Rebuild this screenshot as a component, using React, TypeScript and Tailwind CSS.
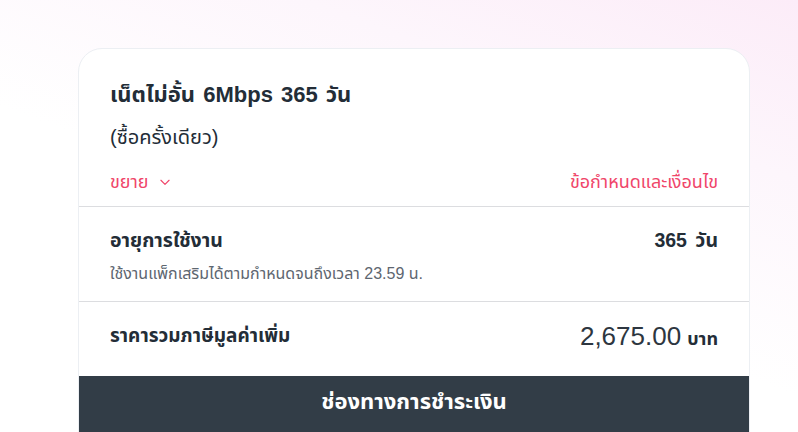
import React from "react";

export default function App() {
  return (
    <div
      className="w-[798px] h-[432px] overflow-hidden bg-[linear-gradient(200deg,#fcecf8_0%,#fdf6fc_25%,#ffffff_55%)]"
      style={{ fontFamily: '"Liberation Sans", "Noto Sans Thai", "Noto Sans Thai UI", Arial, sans-serif' }}
    >
      <div className="pt-[48px] pl-[78px]">
        <div className="w-[672px] rounded-t-[24px] border border-[#eceff3] bg-white text-[#232d37]">
          <div className="px-[31px] pt-[30px]">
            <div className="text-[22px] font-bold leading-[32px] [word-spacing:2px]">เน็ตไม่อั้น 6Mbps 365 วัน</div>
            <div className="mt-[11px] text-[20px] leading-[30px]">(ซื้อครั้งเดียว)</div>
            <div className="mt-[16px] flex items-center justify-between pb-[10px] text-[18px] leading-[28px] text-[#f0466a]">
              <div className="flex items-center gap-[9px]">
                <span>ขยาย</span>
                <svg width="14" height="14" viewBox="0 0 24 24" fill="none" stroke="currentColor" strokeWidth="2" strokeLinecap="round" strokeLinejoin="round">
                  <path d="M5 9l7 7 7-7" />
                </svg>
              </div>
              <span>ข้อกำหนดและเงื่อนไข</span>
            </div>
          </div>
          <div className="border-t border-[#dcdde0] px-[31px] pt-[18px] pb-[14px]">
            <div className="flex items-center justify-between text-[19.5px] font-bold leading-[30px]">
              <span>อายุการใช้งาน</span>
              <span className="[word-spacing:3px]">365 วัน</span>
            </div>
            <div className="mt-[6px] text-[16px] leading-[26px] text-[#5d6670]">
              ใช้งานแพ็กเสริมได้ตามกำหนดจนถึงเวลา 23.59 น.
            </div>
          </div>
          <div className="flex h-[75px] items-center justify-between border-t border-[#dcdde0] px-[31px] pb-[6px]">
            <span className="text-[19px] font-bold">ราคารวมภาษีมูลค่าเพิ่ม</span>
            <span className="flex items-baseline gap-[6px]">
              <span className="text-[26px] text-[#2d3640]">2,675.00</span>
              <span className="text-[18px] font-bold">บาท</span>
            </span>
          </div>
          <div className="flex h-[60px] items-start justify-center bg-[#323d47] pt-[11px] text-[22px] font-bold leading-[30px] text-white">
            ช่องทางการชำระเงิน
          </div>
        </div>
      </div>
    </div>
  );
}
